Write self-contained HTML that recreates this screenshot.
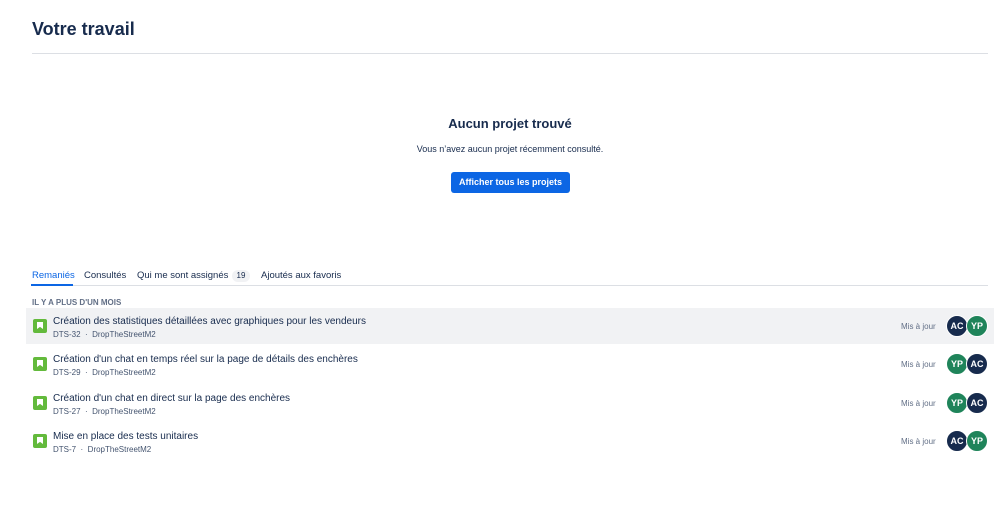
<!DOCTYPE html><html><head><style>
body{margin:0;width:998px;height:507px;background:#fff;font-family:"Liberation Sans",sans-serif;color:#172b4d;position:relative;overflow:hidden}
.a{position:absolute}
h1{position:absolute;left:32px;top:19px;margin:0;font-size:18px;font-weight:600}
.row{position:absolute;left:26px;width:968px;height:36px}
.ic{position:absolute;left:7px;top:11px;width:14px;height:14px;background:#63ba3c;border-radius:2px}
.ic:after{content:"";position:absolute;left:4px;top:3px;width:6px;height:7px;background:#fff;clip-path:polygon(0 0,100% 0,100% 100%,50% 70%,0 100%)}
.t{position:absolute;left:27px;top:8px;font-size:10px}
.s{position:absolute;left:27px;top:22px;font-size:8px;color:#44546f}
.m{position:absolute;left:875px;top:14px;font-size:8px;color:#626f86}
.av{position:absolute;top:7px;width:20px;height:20px;border-radius:50%;border:1.5px solid #fff;color:#fff;font-size:9px;font-weight:bold;text-align:center;line-height:20px}
.ac{background:#172b4d}.yp{background:#1f845a}
.tab{position:absolute;top:270px;font-size:9.5px;white-space:nowrap}
</style></head><body>
<h1>Votre travail</h1>
<div class="a" style="left:32px;top:53px;width:956px;height:1px;background:#dcdfe4"></div>
<div class="a" style="left:0;width:1020px;top:116px;text-align:center;font-size:13px;font-weight:bold">Aucun projet trouvé</div>
<div class="a" style="left:0;width:1020px;top:144px;text-align:center;font-size:9px">Vous n’avez aucun projet récemment consulté.</div>
<div class="a" style="left:451px;top:172px;width:119px;height:21px;background:#0c66e4;border-radius:3px;color:#fff;font-size:9px;font-weight:bold;text-align:center;line-height:21px">Afficher tous les projets</div>
<div class="tab" style="left:32px;color:#0c66e4">Remaniés</div>
<div class="tab" style="left:84px">Consultés</div>
<div class="tab" style="left:137px">Qui me sont assignés</div>
<div class="a" style="left:232px;top:270px;width:18px;height:12px;background:#f1f2f4;border-radius:6px;font-size:8px;text-align:center;line-height:12px">19</div>
<div class="tab" style="left:261px">Ajoutés aux favoris</div>
<div class="a" style="left:32px;top:285px;width:956px;height:1px;background:#dcdfe4"></div>
<div class="a" style="left:31px;top:284px;width:42px;height:2px;background:#0c66e4"></div>
<div class="a" style="left:32px;top:298px;font-size:8px;font-weight:bold;color:#626f86">IL Y A PLUS D'UN MOIS</div>
<div class="row" style="top:308px;background:#f1f2f4"><div class="ic"></div><div class="t">Création des statistiques détaillées avec graphiques pour les vendeurs</div><div class="s">DTS-32 &nbsp;·&nbsp; DropTheStreetM2</div><div class="m">Mis à jour</div><div class="av ac" style="left:920px">AC</div><div class="av yp" style="left:940px">YP</div></div>
<div class="row" style="top:346px"><div class="ic"></div><div class="t">Création d'un chat en temps réel sur la page de détails des enchères</div><div class="s">DTS-29 &nbsp;·&nbsp; DropTheStreetM2</div><div class="m">Mis à jour</div><div class="av yp" style="left:920px">YP</div><div class="av ac" style="left:940px">AC</div></div>
<div class="row" style="top:385px"><div class="ic"></div><div class="t">Création d'un chat en direct sur la page des enchères</div><div class="s">DTS-27 &nbsp;·&nbsp; DropTheStreetM2</div><div class="m">Mis à jour</div><div class="av yp" style="left:920px">YP</div><div class="av ac" style="left:940px">AC</div></div>
<div class="row" style="top:423px"><div class="ic"></div><div class="t">Mise en place des tests unitaires</div><div class="s">DTS-7 &nbsp;·&nbsp; DropTheStreetM2</div><div class="m">Mis à jour</div><div class="av ac" style="left:920px">AC</div><div class="av yp" style="left:940px">YP</div></div>
</body></html>
